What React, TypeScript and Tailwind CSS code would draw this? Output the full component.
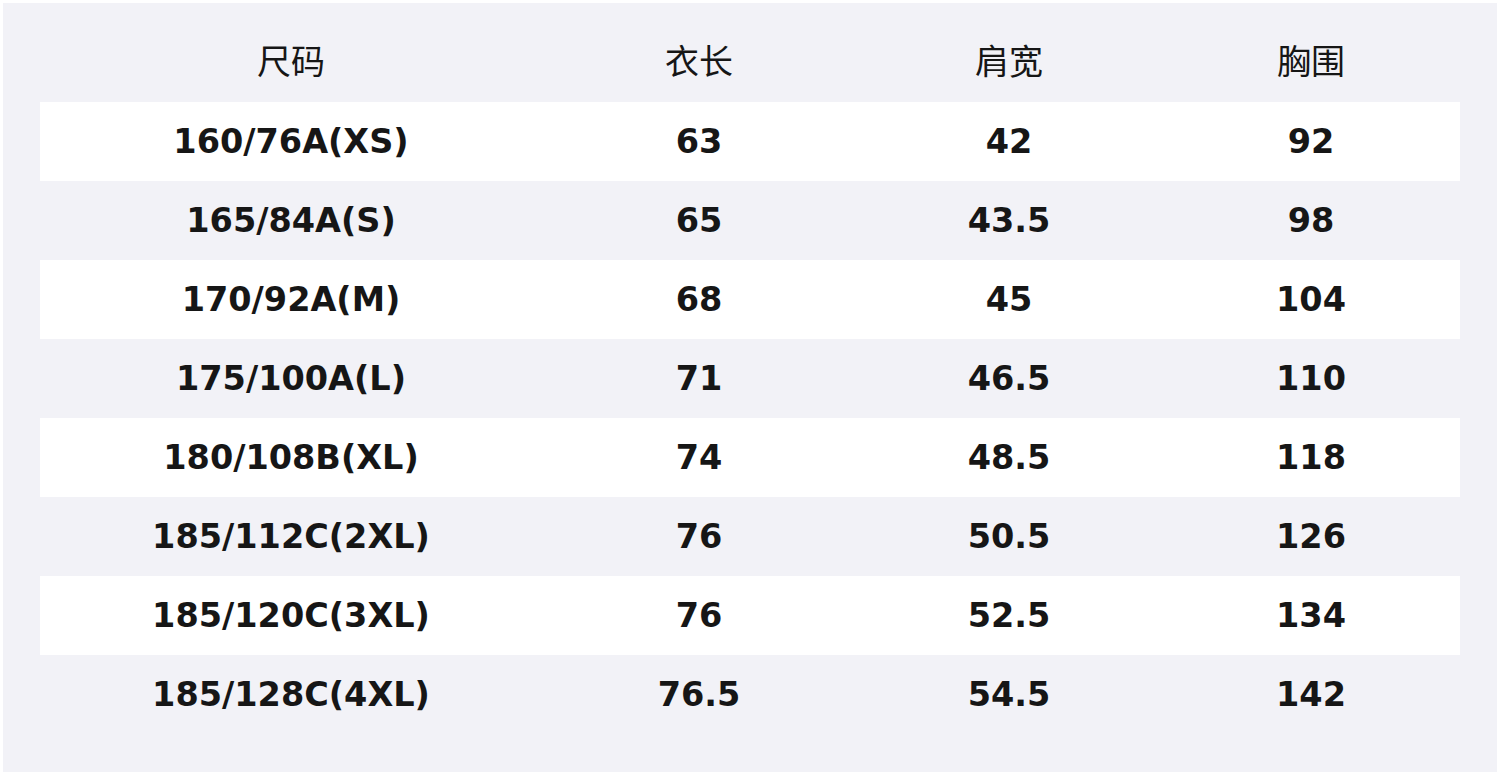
const rows: [string, string, string, string][] = [
  ['160/76A(XS)', '63', '42', '92'],
  ['165/84A(S)', '65', '43.5', '98'],
  ['170/92A(M)', '68', '45', '104'],
  ['175/100A(L)', '71', '46.5', '110'],
  ['180/108B(XL)', '74', '48.5', '118'],
  ['185/112C(2XL)', '76', '50.5', '126'],
  ['185/120C(3XL)', '76', '52.5', '134'],
  ['185/128C(4XL)', '76.5', '54.5', '142'],
];

const headers = ['尺码', '衣长', '肩宽', '胸围'];

export default function App() {
  return (
    <div className="w-[1500px] h-[775px] bg-white p-[3px] font-['DejaVu_Sans','Noto_Sans_CJK_SC',sans-serif] text-[#161616]">
      <div className="h-full bg-[#f2f2f7] px-[37px] pb-[38px]">
        {/* Header */}
        <div className="grid grid-cols-[502px_314px_306px_298px] h-[99px] pt-[20px] items-center text-[34px] font-normal">
          {headers.map((h) => (
            <div key={h} className="text-center">
              {h}
            </div>
          ))}
        </div>
        {rows.map((r, i) => (
          <div
            key={r[0]}
            className={`grid grid-cols-[502px_314px_306px_298px] h-[79px] pt-[2px] items-center text-[33.5px] font-bold ${
              i % 2 === 0 ? 'bg-white' : ''
            }`}
          >
            {r.map((c, j) => (
              <div key={j} className="text-center">
                {c}
              </div>
            ))}
          </div>
        ))}
      </div>
    </div>
  );
}
